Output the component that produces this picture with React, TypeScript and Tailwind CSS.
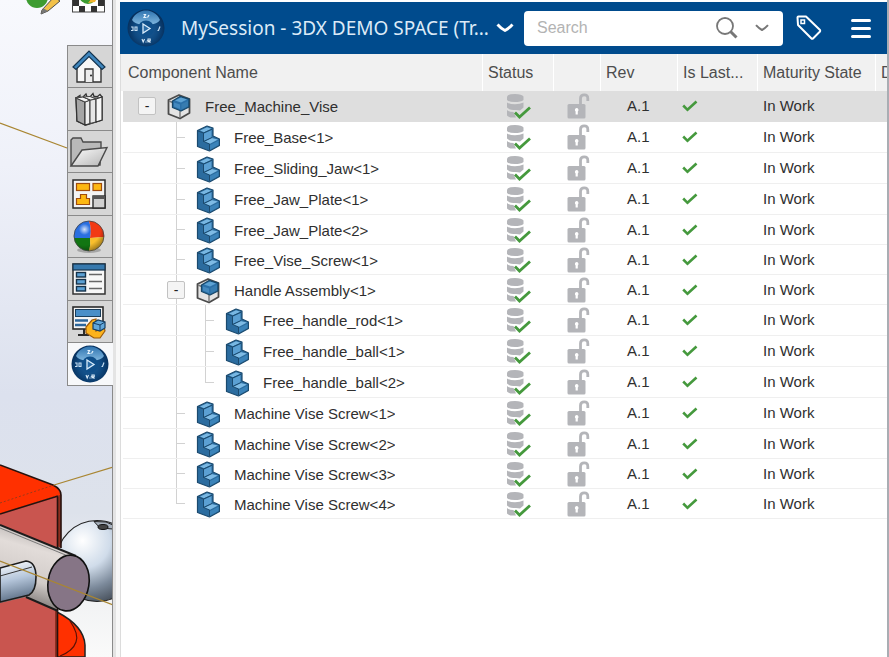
import React, { useState } from "react";

type Kind = "assembly" | "part";

interface Item {
  name: string;
  kind: Kind;
  /** one entry per indent level: what the tree guide shows there */
  guides: Guide[];
}

type Guide = "none" | "line" | "branch" | "end" | "toggle" | "root";

const items: Item[] = [
  { name: "Free_Machine_Vise", kind: "assembly", guides: ["root"] },
  { name: "Free_Base<1>", kind: "part", guides: ["none", "branch"] },
  { name: "Free_Sliding_Jaw<1>", kind: "part", guides: ["none", "branch"] },
  { name: "Free_Jaw_Plate<1>", kind: "part", guides: ["none", "branch"] },
  { name: "Free_Jaw_Plate<2>", kind: "part", guides: ["none", "branch"] },
  { name: "Free_Vise_Screw<1>", kind: "part", guides: ["none", "branch"] },
  { name: "Handle Assembly<1>", kind: "assembly", guides: ["none", "toggle"] },
  { name: "Free_handle_rod<1>", kind: "part", guides: ["none", "line", "branch"] },
  { name: "Free_handle_ball<1>", kind: "part", guides: ["none", "line", "branch"] },
  { name: "Free_handle_ball<2>", kind: "part", guides: ["none", "line", "end"] },
  { name: "Machine Vise Screw<1>", kind: "part", guides: ["none", "branch"] },
  { name: "Machine Vise Screw<2>", kind: "part", guides: ["none", "branch"] },
  { name: "Machine Vise Screw<3>", kind: "part", guides: ["none", "branch"] },
  { name: "Machine Vise Screw<4>", kind: "part", guides: ["none", "end"] },
];

/* ---------- icons ---------- */

function Compass({ id, className }: { id: string; className: string }) {
  return (
    <svg viewBox="0 0 38 38" className={className} aria-hidden="true">
      <defs>
        <radialGradient id={id} cx="50%" cy="55%" r="52%">
          <stop offset="0" stopColor="#1d5f9b" />
          <stop offset="0.6" stopColor="#0f4a82" />
          <stop offset="1" stopColor="#062f5c" />
        </radialGradient>
        <linearGradient id={id + "-g"} x1="0" y1="0" x2="0" y2="1">
          <stop offset="0" stopColor="#2f74b0" />
          <stop offset="1" stopColor="#7fb6de" />
        </linearGradient>
      </defs>
      <circle cx="19" cy="19" r="18.500" fill={`url(#${id})`} />
      <path d="M5 11C8 4 14 1.500 19 1.500S30 4 33 11C31 14 27 15 24.500 15.500C21 12 17 12 13.500 15.500C11 15 7 14 5 11Z" fill={`url(#${id}-g)`} />
      <circle cx="19" cy="19.500" r="8" fill="#0f4f8a" />
      <path d="M16 15L23 19.500L16 24Z" fill="#2a6ca6" stroke="#d8ebfa" strokeWidth="1.300" />
      <path d="M16.500 5.500H18.500L17 8.500H19.500M20.500 8.500L22 6" stroke="#e8f4fd" strokeWidth="1.200" fill="none" />
      <path d="M4 18H6V21.500H4M8 18H10V21.500H8Z" stroke="#c6def2" strokeWidth="1.100" fill="none" />
      <path d="M33 17.500L31.500 21.500H30.500" stroke="#c6def2" strokeWidth="1.200" fill="none" />
      <path d="M15 30L16.200 33L17.500 30M19 33.500V32.500M21 33.500V30H23.200V31.800H21L23.500 33.500" stroke="#dcecf8" strokeWidth="1.100" fill="none" />
    </svg>
  );
}

function HomeIcon() {
  return (
    <svg viewBox="0 0 34 34" className="size-[34px]" aria-hidden="true">
      <path d="M5 16L17 5L29 16V32H5Z" fill="#f7f7f7" stroke="#333" strokeWidth="1.400" />
      <path d="M13 32V19H21V32" fill="#ececec" stroke="#333" strokeWidth="1.300" />
      <circle cx="19" cy="25.500" r="1" fill="#222" />
      <path d="M1 17L17 1L33 17L30 19.500L17 6.500L4 19.500Z" fill="#3f86bd" stroke="#14344f" strokeWidth="1.200" />
    </svg>
  );
}

function BooksIcon() {
  return (
    <svg viewBox="0 0 34 34" className="size-[34px]" aria-hidden="true">
      <path d="M4 6L22 4.500L30 5V28L14 33L5 29Z" fill="#c4c4c4" stroke="#333" strokeWidth="1.400" />
      <path d="M4 6L8 3.500L8 5M11 5L14 2L15 5M18 5L21 1.500L22 4.500M25 5L28 2.500L30 5" fill="#f5f5f5" stroke="#333" strokeWidth="1.300" />
      <path d="M4 6L13 10V33L5 29Z" fill="#a5a5a5" stroke="#333" strokeWidth="1.200" />
      <path d="M13 10L18 8V31.500L13 33Z" fill="#ededed" stroke="#333" strokeWidth="1.100" />
      <path d="M18 8L24 7V30L18 31.500Z" fill="#e6e6e6" stroke="#444" strokeWidth="1.100" />
      <path d="M24 7L30 5V28L24 30Z" fill="#f7f7f7" stroke="#333" strokeWidth="1.100" />
      <path d="M4 6L11 5L18 8L13 10ZM11 5L18 4.500L24 7L18 8Z" fill="#f2f2f2" stroke="#444" strokeWidth="1" />
    </svg>
  );
}

function FolderIcon() {
  return (
    <svg viewBox="0 0 40 32" className="h-8 w-10" aria-hidden="true">
      <defs>
        <linearGradient id="folder" x1="0" y1="0" x2="1" y2="1">
          <stop offset="0" stopColor="#ffffff" />
          <stop offset="1" stopColor="#b4b4b4" />
        </linearGradient>
      </defs>
      <path d="M2 29V4L4 2H12L14 6H32V13L31 29Z" fill="#b9b9b9" stroke="#4a4a4a" strokeWidth="1.400" />
      <path d="M2 30L13 14L38 11.500L29 30Z" fill="url(#folder)" stroke="#4a4a4a" strokeWidth="1.400" />
    </svg>
  );
}

function PaletteIcon() {
  return (
    <svg viewBox="0 0 34 30" className="h-[30px] w-[34px]" aria-hidden="true">
      <rect x="1" y="1" width="32" height="28" fill="#f4f4f4" stroke="#2b2b2b" strokeWidth="1.500" />
      <g fill="#fdb813" stroke="#a04c0e" strokeWidth="1.200">
        <rect x="4.500" y="4.500" width="13" height="7" />
        <rect x="21" y="4.500" width="8.500" height="7" />
        <path d="M8.500 15.500H14.500V19.500H17.500V25.500H4.500V19.500H8.500Z" />
      </g>
      <rect x="21" y="17" width="12" height="12" fill="#d0d0d0" stroke="#2b2b2b" strokeWidth="1.400" />
      <path d="M21 18.500H33" stroke="#555" strokeWidth="3" />
    </svg>
  );
}

function SphereIcon() {
  return (
    <svg viewBox="0 0 34 36" className="h-9 w-[34px]" aria-hidden="true">
      <defs>
        <radialGradient id="shine" cx="35%" cy="28%" r="75%">
          <stop offset="0" stopColor="#fff" stopOpacity="0.800" />
          <stop offset="0.250" stopColor="#fff" stopOpacity="0" />
          <stop offset="0.700" stopColor="#000" stopOpacity="0" />
          <stop offset="1" stopColor="#000" stopOpacity="0.350" />
        </radialGradient>
      </defs>
      <ellipse cx="17" cy="31" rx="12" ry="3" fill="#a5a5a5" />
      <path d="M17 2A15 15 0 0 0 2 19L18 19Q20 10 17 2Z" fill="#2a6fe0" />
      <path d="M17 2Q20 10 18 19L32 18A15 15 0 0 0 17 2Z" fill="#f23a14" />
      <path d="M2 19L18 19Q19 26 17 32A15 15 0 0 1 2 19Z" fill="#127512" />
      <path d="M18 19L32 18A15 15 0 0 1 17 32Q19 26 18 19Z" fill="#f9bf2c" />
      <circle cx="17" cy="17" r="15" fill="url(#shine)" stroke="#444" strokeWidth="0.800" />
    </svg>
  );
}

function PropertiesIcon() {
  return (
    <svg viewBox="0 0 34 32" className="h-8 w-[34px]" aria-hidden="true">
      <rect x="1" y="1" width="32" height="30" fill="#f7f7f7" stroke="#333" strokeWidth="1.500" />
      <rect x="1" y="1" width="32" height="6" fill="#3779ad" stroke="#17344d" strokeWidth="1.200" />
      <g fill="#5ba0d4" stroke="#16324a" strokeWidth="1.400">
        <rect x="4.500" y="9.500" width="9" height="4.500" />
        <rect x="4.500" y="16.500" width="9" height="4.500" />
        <rect x="4.500" y="23.500" width="9" height="4.500" />
      </g>
      <path d="M17 11.500H30M17 18.500H30M17 25.500H30" stroke="#666" strokeWidth="1.600" />
    </svg>
  );
}

function MonitorIcon() {
  return (
    <svg viewBox="0 0 34 34" className="size-[34px]" aria-hidden="true">
      <rect x="1" y="2" width="30" height="22" fill="#f4f4f4" stroke="#2b2b2b" strokeWidth="1.600" />
      <rect x="3.500" y="4.500" width="25" height="7" fill="#4a8fc8" stroke="#1a3e5c" />
      <path d="M3 15.500H16M3 20H14" stroke="#2c669a" strokeWidth="2.600" />
      <path d="M12 24V29M6 30H17" stroke="#2b2b2b" strokeWidth="2" />
      <path d="M14 22L20 15L24 14V26L32 22L33 26L28 33H22L14 28Z" fill="#fdb31c" stroke="#9b5a0b" strokeWidth="1.200" />
      <path d="M21 18L26 15L33 17V23L28 26L21 24Z" fill="#62a8dc" stroke="#163f63" strokeWidth="1.200" />
      <path d="M21 18L28 20V26M28 20L33 17" fill="none" stroke="#163f63" />
    </svg>
  );
}

function PartIcon() {
  return (
    <svg viewBox="0 0 24 27" className="h-[27px] w-6 shrink-0" aria-hidden="true">
      <path d="M1.500 5.500L11 1L17 3V11L23.500 14V20.500L13.500 26L1.500 21.500Z" fill="#2b6c9f" stroke="#1b4a6e" strokeWidth="1.200" strokeLinejoin="round" />
      <path d="M4 5.500L11 2.300L15.500 3.800L8 7.300Z" fill="#78b7e2" />
      <path d="M8 8.500L15.500 5V12.500L8 16Z" fill="#5ba0d3" />
      <path d="M8 17L15.500 13L22 14.500L14 18.800Z" fill="#7ebbe5" />
      <path d="M14 20L22.500 15.800V20L14 24.700Z" fill="#3b83b9" />
      <path d="M2 6L7.500 8V16.500L13.500 19V25M7.500 8L16 4.200M7.500 16.500L16 12.500" fill="none" stroke="#1b4a6e" strokeWidth="1" />
    </svg>
  );
}

function AssemblyIcon() {
  return (
    <svg viewBox="0 0 24 26" className="h-[26px] w-6 shrink-0" aria-hidden="true">
      <path d="M1.500 6L12 1L22.500 5V19L13 24.500L1.500 20Z" fill="#e4e4e4" stroke="#4b4b4b" strokeWidth="1.800" strokeLinejoin="round" />
      <path d="M2 7L7 9M13 17V24" stroke="#777" strokeWidth="1.400" />
      <path d="M5.500 7L13 2.500L22 5V13L14 17L5.500 13.500Z" fill="#2b70a8" stroke="#174768" strokeWidth="1.300" strokeLinejoin="round" />
      <path d="M8 6.500L14 3.500L20 5.500L14 8.500Z" fill="#5da2d3" />
      <path d="M7 8.500L13 10.500V15L7 12.500Z" fill="#4489be" />
      <path d="M14.500 10L21 7V12L14.500 15.500Z" fill="#377cb0" />
    </svg>
  );
}

function StatusIcon() {
  return (
    <svg viewBox="0 0 26 26" className="h-[26px] w-[26px]" role="img" aria-label="Up to date">
      <g fill="#b4b5b9">
        <path d="M1 3.500Q2 1 9 1T17.500 3.500V7Q15 9 9 9T1 7Z" />
        <path d="M1 9.500Q4 11.200 9 11.200T17.500 9.500V14.500L14 17.500L10 17Q3 17 1 14.500Z" />
        <path d="M1 17Q3 19 7.500 19L10 24.500Q3 25 1 22.500Z" />
      </g>
      <path d="M9 19.500L13.500 24L24 14.500" fill="none" stroke="#45993d" strokeWidth="2.800" />
    </svg>
  );
}

function LockIcon() {
  return (
    <svg viewBox="0 0 23 26" className="h-[26px] w-[23px]" role="img" aria-label="Unlocked">
      <path d="M13.500 12V5.500Q13.500 1.800 17.200 1.800T20.800 5.500V8" fill="none" stroke="#b4b5b9" strokeWidth="2.800" />
      <rect x="0.500" y="11" width="18" height="14.500" rx="1.500" fill="#b4b5b9" />
      <path d="M9.500 15A2 2 0 0 1 10.800 18.500V21.500H8.600V18.500A2 2 0 0 1 9.500 15Z" fill="#fff" />
    </svg>
  );
}

function CheckIcon() {
  return (
    <svg viewBox="0 0 16 12" className="h-3 w-4" role="img" aria-label="Yes">
      <path d="M1.200 5.500L5.500 9.800L14.500 1.500" fill="none" stroke="#45993d" strokeWidth="2.600" />
    </svg>
  );
}

/* ---------- 3D viewport ---------- */

function Scene() {
  return (
    <svg viewBox="0 0 113 657" className="absolute top-0 left-0 h-[657px] w-[113px]" aria-hidden="true">
      <defs>
        <linearGradient id="sky" x1="0" y1="0" x2="0" y2="1">
          <stop offset="0" stopColor="#f8f9fd" />
          <stop offset="0.250" stopColor="#eff1f9" />
          <stop offset="0.600" stopColor="#dce1ee" />
          <stop offset="0.780" stopColor="#dde2eb" />
          <stop offset="0.920" stopColor="#f2f3f4" />
          <stop offset="1" stopColor="#fafafa" />
        </linearGradient>
        <linearGradient id="rod" x1="0.400" y1="0" x2="0.150" y2="1">
          <stop offset="0" stopColor="#b5b0ae" />
          <stop offset="0.250" stopColor="#e2dcd9" />
          <stop offset="0.600" stopColor="#d2ccc9" />
          <stop offset="1" stopColor="#5c5857" />
        </linearGradient>
        <linearGradient id="bar" x1="0" y1="0" x2="0.200" y2="1">
          <stop offset="0" stopColor="#ffffff" />
          <stop offset="0.500" stopColor="#b5c6db" />
          <stop offset="1" stopColor="#5f7288" />
        </linearGradient>
        <radialGradient id="ball" cx="32%" cy="25%" r="85%">
          <stop offset="0" stopColor="#ffffff" />
          <stop offset="0.400" stopColor="#d0dcea" />
          <stop offset="0.700" stopColor="#7c8a9b" />
          <stop offset="1" stopColor="#3e4650" />
        </radialGradient>
      </defs>
      <rect width="113" height="657" fill="url(#sky)" />
      {/* scene tools, cut by the window's top edge */}
      <circle cx="37" cy="-3" r="11" fill="#3d9c31" />
      <path d="M42 10L54 -3L60 1L48 11L41 14Z" fill="#f2c14a" stroke="#4d4d4d" />
      <path d="M41 14L43 8L48 11Z" fill="#777" />
      <rect x="72.500" y="-8" width="32" height="20" fill="#fff" stroke="#444" />
      <path d="M73 0H79V6H73ZM79 6H85V12H79ZM91 6H97V12H91ZM98 0H104V6H98Z" fill="#333" />
      <circle cx="88" cy="-5" r="9" fill="#3d9c31" />
      <path d="M88 3L92 -2H97L95 2Z" fill="#f2b530" />
      {/* axes behind */}
      <path d="M0 123L67 148" stroke="#a98632" strokeWidth="1.300" />
      {/* ball */}
      <circle cx="97" cy="561" r="40.500" fill="url(#ball)" stroke="#222" strokeWidth="1.200" />
      <path d="M94 521.500L106 522L113 525V529L100 528Z" fill="#a9b3bf" stroke="#222" />
      <ellipse cx="103" cy="527" rx="5" ry="2.500" fill="#444" stroke="#111" />
      {/* red body */}
      <path d="M57 612Q84 626 85 645V657H57Z" fill="#ff3000" stroke="#222" strokeWidth="1.500" />
      <path d="M70 621Q79 634 76 642Q73 651 60 656" fill="none" stroke="#5c1206" strokeWidth="1.200" />
      <path d="M0 514L58 496V657H0Z" fill="#c9554f" />
      <path d="M57 497L61 490V548L57 546ZM55 600H58V657H55Z" fill="#8e2f20" />
      <path d="M0 465L53 485Q61 489 60 495L0 514Z" fill="#ff3000" />
      <path d="M0 465L53 485Q61 489 61 495V548M0 514L58 496M57.500 497V657" fill="none" stroke="#26120e" strokeWidth="1.600" />
      {/* rod */}
      <path d="M0 525L76 556L56 611L26 597L0 603Z" fill="url(#rod)" />
      <path d="M0 525L76 556M26 597L58 611" stroke="#1c1c1c" strokeWidth="2" />
      <path d="M0 528L68 556" stroke="#777" />
      <path d="M0 568L26 561Q36 562 36 577Q36 591 29 595L0 602Z" fill="url(#bar)" stroke="#1c1c1c" strokeWidth="1.600" />
      <path d="M0 576L32 567" stroke="#333" strokeWidth="1" />
      <ellipse cx="68.500" cy="583" rx="20.500" ry="28" transform="rotate(9 68.500 583)" fill="#867586" stroke="#111" strokeWidth="1.600" />
      <path d="M0 503L54 485" stroke="#9c3a1a" strokeWidth="1" strokeDasharray="2 2" />
      <path d="M54 485L113 467M0 561L113 605" stroke="#a98632" strokeWidth="1.300" />
    </svg>
  );
}

const tabs: { label: string; icon: React.ReactNode }[] = [
  { label: "Resources", icon: <HomeIcon /> },
  { label: "Design Library", icon: <BooksIcon /> },
  { label: "File Explorer", icon: <FolderIcon /> },
  { label: "View Palette", icon: <PaletteIcon /> },
  { label: "Appearances", icon: <SphereIcon /> },
  { label: "Custom Properties", icon: <PropertiesIcon /> },
  { label: "Forum", icon: <MonitorIcon /> },
  { label: "3DEXPERIENCE", icon: <Compass id="compass-tab" className="size-[38px]" /> },
];

function TaskTabs() {
  return (
    <nav aria-label="Task pane" className="relative mt-[45px] flex w-[46px] flex-col self-start border-t border-l border-[#8a8a8a]">
      {tabs.map((t, i) => (
        <button
          key={t.label}
          type="button"
          aria-label={t.label}
          className={
            "flex items-center justify-center border-b border-[#8a8a8a] pr-[2px] odd:h-[42px] even:h-[43px] " +
            (i === tabs.length - 1 ? "bg-[#f7f8fa]" : "border-r bg-[#d6d6d6]")
          }
        >
          {t.icon}
        </button>
      ))}
    </nav>
  );
}

/* ---------- tree table ---------- */

function Toggle({ name }: { name: string }) {
  return (
    <button
      type="button"
      aria-label={"Collapse " + name}
      className="flex size-[18px] shrink-0 items-center justify-center rounded-xs border border-[#c2c2c2] bg-[#f4f4f4] text-sm leading-none text-[#222]"
    >
      -
    </button>
  );
}

function GuideSlot({ guide, name }: { guide: Guide; name: string }) {
  if (guide === "root" || guide === "toggle") {
    const line = guide === "toggle" ? "w-px flex-1 bg-[#d2d2d2]" : "flex-1";
    return (
      <span className="flex w-[18px] flex-col items-center">
        <span className={line} />
        <Toggle name={name} />
        <span className={line} />
      </span>
    );
  }
  if (guide === "none") return <span className="w-[18px]" />;
  return (
    <span className="flex w-[18px] flex-col pl-[9px]">
      <span className={guide === "line" ? "flex-1 border-l border-[#d2d2d2]" : "flex-1 border-b border-l border-[#d2d2d2]"} />
      <span className={guide === "end" ? "flex-1" : "flex-1 border-l border-[#d2d2d2]"} />
    </span>
  );
}

function Row({ item, index, selected, onSelect }: { item: Item; index: number; selected: boolean; onSelect: () => void }) {
  const line = selected ? "border-b border-[#dedede] bg-[#dedede]" : "border-b border-[#efefef]";
  return (
    <tr onClick={onSelect} aria-selected={selected}>
      <td className="pl-[2px]">
        <div className={"flex gap-[11px] pl-[15px] " + (index % 7 < 4 ? "h-[31px] " : "h-[30px] ") + line}>
          {item.guides.map((g, i) => (
            <GuideSlot key={i} guide={g} name={item.name} />
          ))}
          <span className="flex min-w-0 items-center gap-[14px] pt-[2px]">
            {item.kind === "part" ? <PartIcon /> : <AssemblyIcon />}
            <span className="truncate">{item.name}</span>
          </span>
        </div>
      </td>
      <td className={"pl-6 " + line}><StatusIcon /></td>
      <td className={"pl-[14px] " + line}><LockIcon /></td>
      <td className={"pl-[27px] " + line}>A.1</td>
      <td className={"pl-[5px] " + line}><CheckIcon /></td>
      <td className={"pl-[6px] " + line}>In Work</td>
      <td className={line} />
    </tr>
  );
}

function ComponentTable() {
  const [selected, setSelected] = useState(0);
  const th = "h-[37px] overflow-hidden border-l border-white pl-[5px] text-left font-normal whitespace-nowrap";
  return (
    <table className="w-full table-fixed border-separate border-spacing-0 text-[15px] leading-5 text-[#2f2f2f]">
      <colgroup>
        <col />
        <col className="w-[71px]" />
        <col className="w-[47px]" />
        <col className="w-[77px]" />
        <col className="w-[80px]" />
        <col className="w-[118px]" />
        <col className="w-[12px]" />
      </colgroup>
      <thead className="bg-[#f1f1f1] text-base text-[#4d4d4d]">
        <tr>
          <th scope="col" className="h-[37px] pl-[7px] text-left font-normal">Component Name</th>
          <th scope="col" className={th}>Status</th>
          <th scope="col" className={th} aria-label="Lock" />
          <th scope="col" className={th}>Rev</th>
          <th scope="col" className={th}>Is Last...</th>
          <th scope="col" className={th}>Maturity State</th>
          <th scope="col" className={th}>D</th>
        </tr>
      </thead>
      <tbody>
        {items.map((item, i) => (
          <Row key={item.name} item={item} index={i} selected={i === selected} onSelect={() => setSelected(i)} />
        ))}
      </tbody>
    </table>
  );
}

function PanelHeader() {
  return (
    <header className="flex h-[52px] items-center bg-[#004b8d] pr-4 pl-[7px] text-white">
      <Compass id="compass-head" className="size-[38px] shrink-0" />
      <h1 className="ml-4 min-w-0 flex-1 truncate font-['Noto_Sans',sans-serif] text-[19px] leading-6 text-[#dceaf7]">
        MySession - 3DX DEMO SPACE (Tr...
      </h1>
      <button type="button" aria-label="Choose session" className="ml-1 shrink-0">
        <svg viewBox="0 0 18 10" className="h-[10px] w-[18px]" aria-hidden="true">
          <path d="M1.500 1.500Q5 5.500 9 7.500Q13 5.500 16.500 1.500" fill="none" stroke="#fff" strokeWidth="2.800" />
        </svg>
      </button>
      <div className="ml-[10px] flex h-[35px] w-[259px] shrink-0 items-center rounded-sm bg-white pr-[14px] pl-[13px]">
        <input
          type="search"
          aria-label="Search"
          placeholder="Search"
          className="min-w-0 flex-1 bg-transparent text-base text-[#333] outline-none placeholder:text-[#b3b3b3]"
        />
        <button type="button" aria-label="Run search">
          <svg viewBox="0 0 24 24" className="size-6" fill="none" stroke="#777" aria-hidden="true">
            <circle cx="10" cy="10" r="8" strokeWidth="1.800" />
            <path d="M15.500 15.500L21.500 21.500" strokeWidth="3" />
          </svg>
        </button>
        <button type="button" aria-label="Search options" className="ml-4">
          <svg viewBox="0 0 14 8" className="h-2 w-[14px]" aria-hidden="true">
            <path d="M1 1.200Q4 4.500 7 6Q10 4.500 13 1.200" fill="none" stroke="#777" strokeWidth="2" />
          </svg>
        </button>
      </div>
      <button type="button" aria-label="Tags" className="ml-[13px] shrink-0">
        <svg viewBox="0 0 26 26" className="size-[26px]" fill="none" stroke="#fff" aria-hidden="true">
          <path d="M1.500 2.500Q1.500 1.500 2.500 1.500H10L24 15Q24.500 16 24 16.500L17 23.500Q16 24 15.500 23.500L2 10Z" strokeWidth="2" strokeLinejoin="round" />
          <rect x="5" y="5" width="3.500" height="3.500" strokeWidth="1.500" />
        </svg>
      </button>
      <button type="button" aria-label="Menu" className="ml-[29px] flex shrink-0 flex-col gap-[5px]">
        <span className="h-[3px] w-5 rounded-xs bg-white" />
        <span className="h-[3px] w-5 rounded-xs bg-white" />
        <span className="h-[3px] w-5 rounded-xs bg-white" />
      </button>
    </header>
  );
}

export default function App() {
  return (
    <div className="flex min-h-screen bg-white font-['Liberation_Sans',Arial,sans-serif]">
      <aside className="relative flex w-[113px] shrink-0 justify-end overflow-hidden">
        <Scene />
        <div className="absolute inset-y-0 right-0 w-px bg-[#8a8a8a]" />
        <TaskTabs />
      </aside>
      <div className="w-[7px] shrink-0 border-r-4 border-[#f8f8f8] bg-[#e4e4e4]" />
      <main className="min-w-0 flex-1 border-r-2 border-[#a9adb3] pt-[2px]">
        <PanelHeader />
        <div className="min-h-[603px] border-l border-[#dcdcdc]">
          <ComponentTable />
        </div>
      </main>
    </div>
  );
}
